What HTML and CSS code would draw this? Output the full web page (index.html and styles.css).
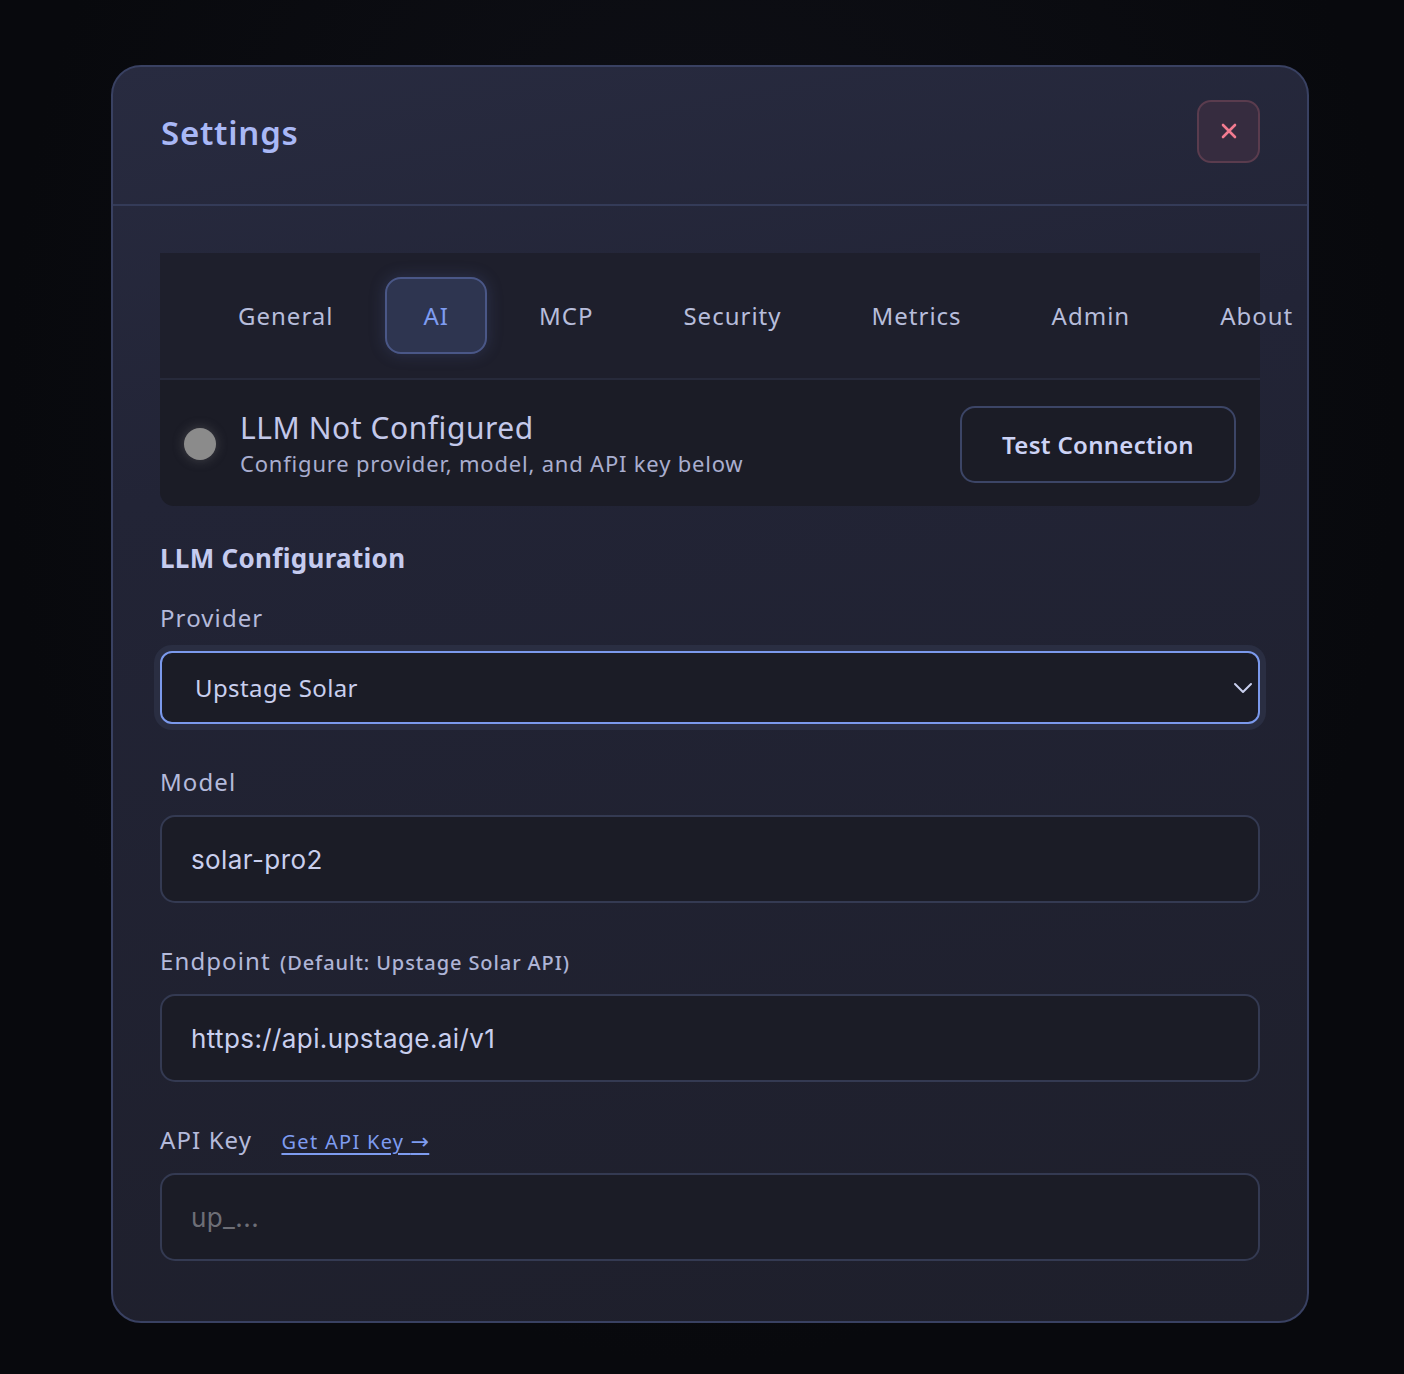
FILE: index.html
```html
<!DOCTYPE html>
<html lang="en">
<head>
<meta charset="utf-8">
<title>Settings</title>
<link rel="stylesheet" href="styles.css">
</head>
<body>
<div class="modal">
  <header class="modal-header">
    <h1 class="title">Settings</h1>
    <button class="close-btn" aria-label="Close">
      <svg width="18" height="18" viewBox="0 0 18 18"><path d="M3 3L15 15M15 3L3 15" stroke="#f27b90" stroke-width="2.6" stroke-linecap="round"/></svg>
    </button>
  </header>
  <div class="modal-body">
    <nav class="tabs">
      <button class="tab">General</button>
      <button class="tab active">AI</button>
      <button class="tab">MCP</button>
      <button class="tab">Security</button>
      <button class="tab">Metrics</button>
      <button class="tab">Admin</button>
      <button class="tab">About</button>
    </nav>
    <div class="status-card">
      <span class="dot"></span>
      <div class="status-text">
        <div class="status-title">LLM Not Configured</div>
        <div class="status-sub">Configure provider, model, and API key below</div>
      </div>
      <button class="test-btn">Test Connection</button>
    </div>
    <h2 class="section-title">LLM Configuration</h2>
    <div class="fields">
      <div class="field">
        <label class="label">Provider</label>
        <div class="select">
          <span>Upstage Solar</span>
          <svg class="chev" width="20" height="12" viewBox="0 0 20 12"><path d="M2 2L10 10L18 2" fill="none" stroke="#c9cfee" stroke-width="2" stroke-linecap="round" stroke-linejoin="round"/></svg>
        </div>
      </div>
      <div class="field">
        <label class="label">Model</label>
        <div class="input">solar-pro2</div>
      </div>
      <div class="field">
        <label class="label">Endpoint <span class="hint">(Default: Upstage Solar API)</span></label>
        <div class="input">https://api.upstage.ai/v1</div>
      </div>
      <div class="field">
        <label class="label">API Key <a class="link" href="#">Get API Key <span class="arrow">→</span></a></label>
        <div class="input placeholder">up_...</div>
      </div>
    </div>
  </div>
</div>
</body>
</html>
```
FILE: styles.css
```css
* { box-sizing: border-box; }
html, body { margin: 0; padding: 0; }
body {
  background: radial-gradient(ellipse at 50% 30%, #0f1017 0%, #08090d 70%);
  min-height: 1374px;
  font-family: "Noto Sans", "Roboto", sans-serif;
  overflow: hidden;
}
.modal {
  width: 1198px;
  margin: 65px 0 0 111px;
  border: 2px solid #394162;
  border-radius: 30px;
  background: linear-gradient(170deg, #282b40 0%, #222436 30%, #1e1f2b 100%);
  overflow: visible;
}
.modal-header {
  height: 139px;
  border-bottom: 2px solid #343b58;
  display: flex;
  align-items: center;
  justify-content: space-between;
  padding: 0 47px 4px 48px;
}
.title {
  margin: 0;
  font-size: 33px;
  font-weight: 600;
  color: #a9b8f6;
  line-height: 40px;
  letter-spacing: 0.75px;
  margin-top: -2px;
}
.close-btn {
  width: 63px;
  height: 63px;
  border-radius: 14px;
  border: 2px solid #5a3c4e;
  background: #362c3f;
  display: flex;
  align-items: center;
  justify-content: center;
  padding: 0;
  margin-top: -5px;
}
.modal-body {
  padding: 47px 47px 60px 47px;
}
.tabs {
  display: flex;
  gap: 14px;
  height: 127px;
  padding: 24px 0 0 40px;
  background: #1e1f2c;
  border-bottom: 2px solid #272a3b;
  white-space: nowrap;
}
.tab {
  height: 77px;
  padding: 0 36px;
  border: 2px solid transparent;
  border-radius: 16px;
  background: transparent;
  font-family: inherit;
  font-size: 24px;
  letter-spacing: 1px;
  color: #b7bddb;
  flex: none;
}
.tab.active {
  color: #7e9cf0;
  background: #2e3550;
  border-color: #4a5787;
  box-shadow: 0 0 16px rgba(90, 110, 180, 0.25);
}
.status-card {
  margin-top: 0;
  height: 126px;
  background: #1b1c26;
  border-radius: 0 0 14px 14px;
  display: flex;
  align-items: center;
  padding: 0 24px 2px 24px;
}
.dot {
  width: 32px;
  height: 32px;
  border-radius: 50%;
  background: #8b8b8b;
  box-shadow: 0 0 12px rgba(140, 140, 140, 0.35);
  flex: none;
  margin-top: 4px;
}
.status-text {
  margin-left: 24px;
  flex: 1;
}
.status-title {
  font-size: 30px;
  color: #c3c8ea;
  line-height: 36px;
  letter-spacing: 0.55px;
  margin-top: 4px;
}
.status-sub {
  font-size: 22px;
  color: #a9aecf;
  line-height: 30px;
  margin-top: 2px;
  letter-spacing: 0.8px;
}
.test-btn {
  width: 276px;
  height: 77px;
  border: 2px solid #3c4566;
  border-radius: 15px;
  background: transparent;
  color: #cdd3f5;
  font-family: inherit;
  font-size: 24px;
  font-weight: 600;
  letter-spacing: 0.3px;
  margin-top: 4px;
}
.section-title {
  margin: 36px 0 0 0;
  font-size: 26px;
  line-height: 32px;
  font-weight: 700;
  color: #c5cbef;
  letter-spacing: 0.3px;
}
.fields {
  margin-top: 28px;
  display: flex;
  flex-direction: column;
  gap: 42px;
}
.field {
  display: flex;
  flex-direction: column;
}
.label {
  font-size: 24px;
  line-height: 32px;
  height: 32px;
  color: #b4badb;
  margin-bottom: 17px;
  white-space: nowrap;
  letter-spacing: 1.1px;
}
.hint {
  font-size: 20px;
  font-weight: 500;
  color: #aeb4d6;
  letter-spacing: 0.9px;
  margin-left: 2px;
}
.link {
  font-size: 20px;
  color: #7e9cf0;
  margin-left: 22px;
  text-decoration: underline;
  text-underline-offset: 4px;
  letter-spacing: 1.3px;
}
.arrow {
  font-family: "DejaVu Sans", sans-serif;
  font-size: 22px;
  letter-spacing: 0;
}
.select {
  height: 73px;
  border: 2px solid #7b99ec;
  border-radius: 12px;
  background: #1b1c26;
  box-shadow: 0 0 0 6px #2a2e42;
  display: flex;
  align-items: center;
  justify-content: space-between;
  padding: 0 5px 0 33px;
  font-size: 24px;
  letter-spacing: 0.4px;
  color: #c9cfee;
}
.input {
  height: 88px;
  border: 2px solid #343a52;
  border-radius: 15px;
  background: #1b1c26;
  display: flex;
  align-items: center;
  padding: 0 29px;
  font-family: "Inter", "Roboto", sans-serif;
  font-size: 26px;
  letter-spacing: 0.4px;
  color: #c9cfee;
}
.input.placeholder {
  color: #6d6e76;
}
```
